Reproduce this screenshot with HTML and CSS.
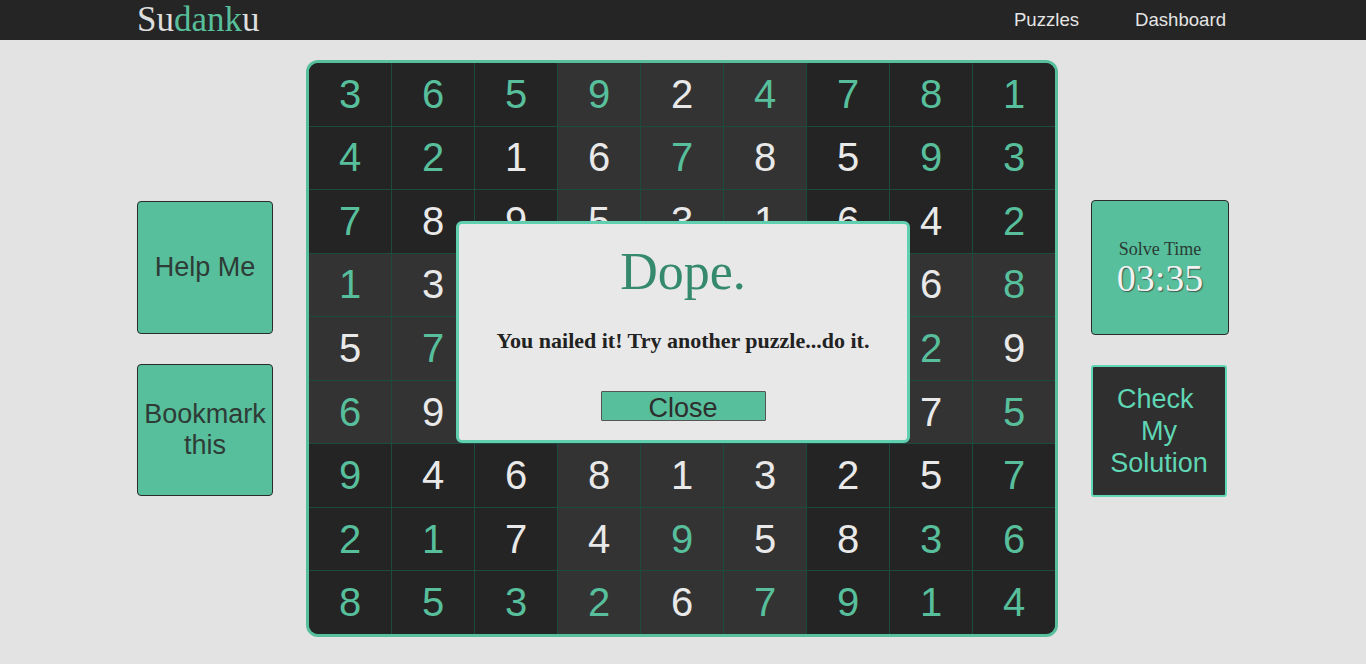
FILE: index.html
```html
<!DOCTYPE html>
<html>
<head>
<meta charset="utf-8">
<title>Sudanku</title>
<link rel="stylesheet" href="styles.css">
</head>
<body>
<nav class="nav">
  <div class="logo">Su<span class="logo-accent">dank</span>u</div>
  <div class="links">
    <a class="link">Puzzles</a>
    <a class="link">Dashboard</a>
  </div>
</nav>
<main class="main">
  <div class="side side-left">
    <div class="btn btn-help">Help Me</div>
    <div class="btn btn-bookmark">Bookmark this</div>
  </div>
  <div class="board-wrap">
    <div class="board">
      <div class="cell d g">3</div><div class="cell d g">6</div><div class="cell d g">5</div><div class="cell l g">9</div><div class="cell l w">2</div><div class="cell l g">4</div><div class="cell d g">7</div><div class="cell d g">8</div><div class="cell d g">1</div>
      <div class="cell d g">4</div><div class="cell d g">2</div><div class="cell d w">1</div><div class="cell l w">6</div><div class="cell l g">7</div><div class="cell l w">8</div><div class="cell d w">5</div><div class="cell d g">9</div><div class="cell d g">3</div>
      <div class="cell d g">7</div><div class="cell d w">8</div><div class="cell d w">9</div><div class="cell l w">5</div><div class="cell l w">3</div><div class="cell l w">1</div><div class="cell d w">6</div><div class="cell d w">4</div><div class="cell d g">2</div>
      <div class="cell l g">1</div><div class="cell l w">3</div><div class="cell l w">2</div><div class="cell d w">7</div><div class="cell d w">5</div><div class="cell d w">9</div><div class="cell l w">4</div><div class="cell l w">6</div><div class="cell l g">8</div>
      <div class="cell l w">5</div><div class="cell l g">7</div><div class="cell l w">4</div><div class="cell d w">1</div><div class="cell d w">8</div><div class="cell d w">6</div><div class="cell l w">3</div><div class="cell l g">2</div><div class="cell l w">9</div>
      <div class="cell l g">6</div><div class="cell l w">9</div><div class="cell l w">8</div><div class="cell d w">3</div><div class="cell d w">4</div><div class="cell d w">2</div><div class="cell l w">1</div><div class="cell l w">7</div><div class="cell l g">5</div>
      <div class="cell d g">9</div><div class="cell d w">4</div><div class="cell d w">6</div><div class="cell l w">8</div><div class="cell l w">1</div><div class="cell l w">3</div><div class="cell d w">2</div><div class="cell d w">5</div><div class="cell d g">7</div>
      <div class="cell d g">2</div><div class="cell d g">1</div><div class="cell d w">7</div><div class="cell l w">4</div><div class="cell l g">9</div><div class="cell l w">5</div><div class="cell d w">8</div><div class="cell d g">3</div><div class="cell d g">6</div>
      <div class="cell d g">8</div><div class="cell d g">5</div><div class="cell d g">3</div><div class="cell l g">2</div><div class="cell l w">6</div><div class="cell l g">7</div><div class="cell d g">9</div><div class="cell d g">1</div><div class="cell d g">4</div>
    </div>
    <div class="modal">
      <h1 class="modal-title">Dope.</h1>
      <p class="modal-text">You nailed it! Try another puzzle...do it.</p>
      <button class="modal-close">Close</button>
    </div>
  </div>
  <div class="side side-right">
    <div class="timer">
      <div class="timer-label">Solve Time</div>
      <div class="timer-value">03:35</div>
    </div>
    <div class="check">Check&nbsp; My Solution</div>
  </div>
</main>
</body>
</html>
```
FILE: styles.css
```css
html, body {
  margin: 0;
  padding: 0;
}
body {
  background: #e3e3e3;
  font-family: "Liberation Sans", Arial, sans-serif;
  height: 664px;
  overflow: hidden;
}
.nav {
  height: 40px;
  background: #252525;
  display: flex;
  align-items: center;
  justify-content: space-between;
  padding: 0 140px 0 137px;
}
.logo {
  font-family: "Liberation Serif", "Times New Roman", serif;
  font-size: 35px;
  color: #dedede;
  line-height: 40px;
  height: 40px;
  margin-top: -1px;
}
.logo-accent {
  color: #57bf9b;
}
.links {
  display: flex;
  gap: 56px;
}
.link {
  color: #e4e4e4;
  font-size: 18.6px;
  line-height: 40px;
}
.main {
  display: flex;
  justify-content: center;
  align-items: center;
  gap: 33px;
  margin-top: 20px;
}
.side {
  display: flex;
  flex-direction: column;
  gap: 30px;
}
.side-left {
  width: 136px;
}
.side-right {
  width: 138px;
  align-items: flex-start;
}
.btn {
  box-sizing: border-box;
  width: 136px;
  background: #57bf9b;
  border: 1px solid #2b2b2b;
  border-radius: 4px;
  color: #2e3b36;
  font-size: 27px;
  line-height: 31px;
  text-align: center;
  display: flex;
  align-items: center;
  justify-content: center;
}
.btn-help {
  height: 133px;
}
.btn-bookmark {
  height: 132px;
}
.board-wrap {
  position: relative;
  width: 752px;
  height: 577px;
}
.board {
  box-sizing: border-box;
  width: 752px;
  height: 577px;
  border: 3px solid #57bf9b;
  border-radius: 12px;
  overflow: hidden;
  background: #1c4a3c;
  display: grid;
  grid-template-columns: repeat(9, 1fr);
  grid-template-rows: repeat(9, 1fr);
  gap: 1px;
}
.cell {
  display: flex;
  align-items: center;
  justify-content: center;
  font-size: 40px;
}
.cell.d {
  background: #242424;
}
.cell.l {
  background: #333333;
}
.cell.g {
  color: #57bf9b;
}
.cell.w {
  color: #e9e9e9;
}
.modal {
  position: absolute;
  left: 150px;
  top: 161px;
  box-sizing: border-box;
  width: 454px;
  height: 222px;
  background: #e8e8e8;
  border: 3px solid #60cfb0;
  border-radius: 6px;
  display: flex;
  flex-direction: column;
  align-items: center;
}
.modal-title {
  margin: 16px 0 0;
  font-family: "Liberation Serif", "Times New Roman", serif;
  font-weight: normal;
  font-size: 52px;
  line-height: 64px;
  color: #358a6e;
}
.modal-text {
  margin: 24px 0 0;
  font-family: "Liberation Serif", "Times New Roman", serif;
  font-weight: bold;
  font-size: 22px;
  line-height: 26px;
  color: #222222;
}
.modal-close {
  margin-top: 37px;
  box-sizing: border-box;
  width: 165px;
  height: 30px;
  padding: 1px 0 0;
  background: #57bf9b;
  border: 1px solid #555555;
  border-radius: 1px;
  font-family: "Liberation Sans", Arial, sans-serif;
  font-size: 27px;
  line-height: 30px;
  color: #2e2e2e;
  overflow: hidden;
}
.timer {
  box-sizing: border-box;
  width: 138px;
  height: 135px;
  background: #57bf9b;
  border: 1px solid #2b2b2b;
  border-radius: 4px;
  display: flex;
  flex-direction: column;
  align-items: center;
  justify-content: center;
  font-family: "Liberation Serif", "Times New Roman", serif;
}
.timer-label {
  font-size: 18px;
  line-height: 20px;
  color: #2b3b35;
}
.timer-value {
  font-size: 38px;
  line-height: 38px;
  color: #f2f2f2;
  text-shadow: 1px 1px 1px #3a5a4e;
}
.check {
  box-sizing: border-box;
  width: 136px;
  height: 132px;
  padding: 0 10px;
  background: #2f2f2f;
  border: 2px solid #5fd6b4;
  border-radius: 3px;
  color: #5fd6b4;
  font-size: 27px;
  line-height: 32px;
  text-align: center;
  display: flex;
  align-items: center;
  justify-content: center;
}
```
